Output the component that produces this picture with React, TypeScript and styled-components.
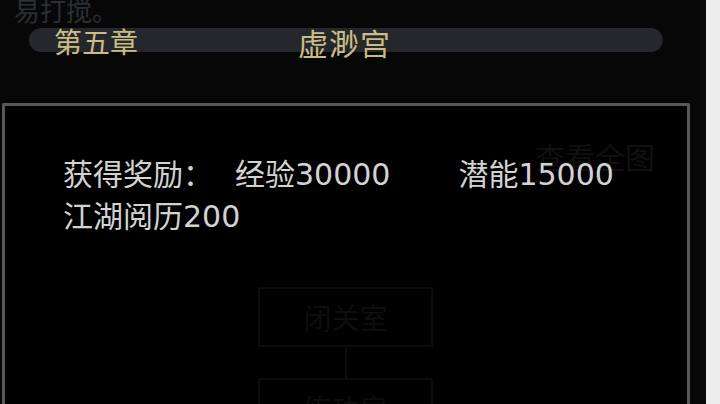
import styled, { createGlobalStyle } from "styled-components";

const GlobalStyle = createGlobalStyle`
  html, body {
    margin: 0;
    padding: 0;
    background: #000;
    overflow: hidden;
  }
`;

const rewards = ["经验30000", "潜能15000", "江湖阅历200"];

const App = () => {
  return (
    <>
      <GlobalStyle />
      <Screen>
        <Main>
          <FadedLine>易打搅。</FadedLine>
          <ChapterBar>
            <ChapterTag>第五章</ChapterTag>
            <SceneName>虚渺宫</SceneName>
          </ChapterBar>
          <Dialog>
            {/* 地图在弹窗后面，只剩一点暗影 */}
            <MapLayer>
              <MapButton>查看全图</MapButton>
              <MapNode $top={181}>闭关室</MapNode>
              <MapLink />
              <MapNode $top={272}>练功房</MapNode>
            </MapLayer>
            <RewardList>
              <RewardLabel>获得奖励：</RewardLabel>
              {rewards.map((item) => (
                <RewardItem key={item}>{item}</RewardItem>
              ))}
            </RewardList>
          </Dialog>
        </Main>
        <SideStrip />
      </Screen>
    </>
  );
};

export default App;

const Screen = styled.div`
  width: 720px;
  height: 404px;
  display: flex;
  overflow: hidden;
  font-family: "Noto Sans CJK SC", "Noto Sans", sans-serif;
`;

const Main = styled.div`
  width: 706px;
  height: 100%;
  display: flex;
  flex-direction: column;
  background-color: #070707;
`;

const SideStrip = styled.div`
  flex: 1;
  background-color: #ededed;
`;

const FadedLine = styled.div`
  height: 26px;
  margin-top: -3px;
  padding-left: 14px;
  font-size: 26px;
  line-height: 26px;
  color: #2b2e32;
`;

const ChapterBar = styled.div`
  height: 24px;
  width: 634px;
  margin: 5px 0 0 29px;
  border-radius: 12px;
  background-color: #26272c;
  display: flex;
  align-items: center;
  font-size: 28px;
  line-height: 24px;
  color: #c8bd85;
`;

const ChapterTag = styled.span`
  margin-left: 25px;
  padding-top: 2px;
`;

const SceneName = styled.span`
  margin-left: 160px;
  padding-top: 4px;
  font-size: 30px;
  letter-spacing: 1px;
`;

const Dialog = styled.div`
  position: relative;
  flex: 1;
  width: 682px;
  margin: 51px 0 0 2px;
  border: 3px solid #585858;
  border-bottom: none;
  border-radius: 2px 2px 0 0;
  background-color: #000;
`;

const MapLayer = styled.div`
  position: absolute;
  inset: 0;
  overflow: hidden;
`;

const MapButton = styled.div`
  position: absolute;
  left: 530px;
  top: 33px;
  font-size: 30px;
  line-height: 34px;
  color: #101010;
`;

const MapNode = styled.div<{ $top: number }>`
  position: absolute;
  left: 253px;
  top: ${(p) => p.$top}px;
  width: 171px;
  height: 56px;
  border: 2px solid #0c0c0c;
  display: flex;
  align-items: center;
  justify-content: center;
  font-size: 28px;
  color: #0e0e0e;
`;

const MapLink = styled.div`
  position: absolute;
  left: 340px;
  top: 241px;
  width: 2px;
  height: 31px;
  background-color: #0c0c0c;
`;

const RewardList = styled.div`
  position: relative;
  width: 625px;
  padding: 48px 0 0 58px;
  display: flex;
  flex-wrap: wrap;
  font-family: "DejaVu Sans", "Noto Sans CJK SC", sans-serif;
  font-size: 30px;
  line-height: 42px;
  color: #d2d2d2;
`;

const RewardLabel = styled.span`
  margin-right: 22px;
`;

const RewardItem = styled.span`
  margin-right: 68px;
`;
